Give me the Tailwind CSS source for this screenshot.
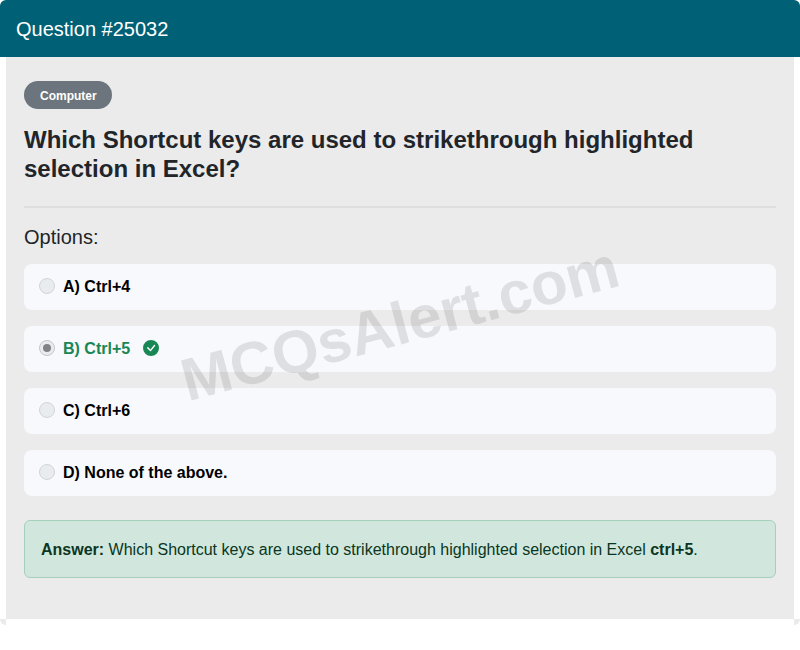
<!DOCTYPE html>
<html lang="en">
<head>
  <meta charset="UTF-8">
  <meta name="viewport" content="width=device-width, initial-scale=1.0">
  <title>Question #25032</title>
  <script src="https://cdn.jsdelivr.net/npm/@tailwindcss/browser@4"></script>
</head>
<body class="bg-white font-['Liberation_Sans',Arial,sans-serif] text-[#212529]">
  <div class="relative overflow-hidden w-[800px] h-[625px] rounded-md">
    <!-- Header -->
    <div class="h-[57px] bg-[#006076] px-4 flex items-center text-white text-xl">Question #25032</div>

    <!-- Body -->
    <div class="mx-[6px] h-[562px] bg-[#ebebeb] px-[18px] pt-6">
      <span class="inline-flex items-center h-7 pl-4 pr-[15px] pt-[2px] rounded-full bg-[#6c757d] text-white text-xs font-bold">Computer</span>
      <h1 class="mt-4 text-2xl leading-[29px] font-bold">Which Shortcut keys are used to strikethrough highlighted selection in Excel?</h1>
      <div class="mt-[23px] border-t-2 border-[#dedede]"></div>
      <div class="mt-[17px] text-xl leading-6">Options:</div>

      <div class="mt-[15px] flex flex-col gap-[16.5px]">
        <div class="h-[45.5px] rounded-lg bg-[#f8f9fd] pl-[15px] flex items-center gap-2 font-bold text-black">
          <span class="w-4 h-4 rounded-full bg-[#e9ecef] border border-[#d2d4d8] -mt-[2px]"></span>
          <span>A) Ctrl+4</span>
        </div>
        <div class="h-[45.5px] rounded-lg bg-[#f8f9fd] pl-[15px] flex items-center gap-2 font-bold text-[#198754]">
          <span class="w-4 h-4 rounded-full bg-[#e9ecef] border border-[#c4c6ca] -mt-[2px] flex items-center justify-center"><span class="w-2 h-2 rounded-full bg-[#808285]"></span></span>
          <span>B) Ctrl+5</span>
          <svg class="ml-[5px] -mt-[1px]" width="16" height="16" viewBox="0 0 16 16" fill="#198754"><path d="M16 8A8 8 0 1 1 0 8a8 8 0 0 1 16 0zm-3.97-3.03a.75.75 0 0 0-1.08.02L7.477 9.417 5.384 7.323a.75.75 0 0 0-1.06 1.06L6.97 11.03a.75.75 0 0 0 1.079-.02l3.992-4.99a.75.75 0 0 0-.01-1.05z"/></svg>
        </div>
        <div class="h-[45.5px] rounded-lg bg-[#f8f9fd] pl-[15px] flex items-center gap-2 font-bold text-black">
          <span class="w-4 h-4 rounded-full bg-[#e9ecef] border border-[#d2d4d8] -mt-[2px]"></span>
          <span>C) Ctrl+6</span>
        </div>
        <div class="h-[45.5px] rounded-lg bg-[#f8f9fd] pl-[15px] flex items-center gap-2 font-bold text-black">
          <span class="w-4 h-4 rounded-full bg-[#e9ecef] border border-[#d2d4d8] -mt-[2px]"></span>
          <span>D) None of the above.</span>
        </div>
      </div>

      <div class="mt-6 h-[58px] rounded-md bg-[#d1e7dd] border border-[#a3cfbb] pl-4 pt-[2px] flex items-center text-[#0a3622]">
        <p><b>Answer:</b> Which Shortcut keys are used to strikethrough highlighted selection in Excel <b>ctrl+5</b>.</p>
      </div>
    </div>

    <!-- Bottom corners of the card showing past the body -->
    <div class="absolute left-0 bottom-0 w-[6px] h-[6px] bg-[#ebebeb]"></div>
    <div class="absolute right-0 bottom-0 w-[6px] h-[6px] bg-[#ebebeb]"></div>

    <!-- Watermark -->
    <div class="absolute left-[175px] top-[294px] -rotate-[15deg] text-[60px] leading-none font-bold text-black/10 whitespace-nowrap pointer-events-none">MCQsAlert.com</div>
  </div>
</body>
</html>
